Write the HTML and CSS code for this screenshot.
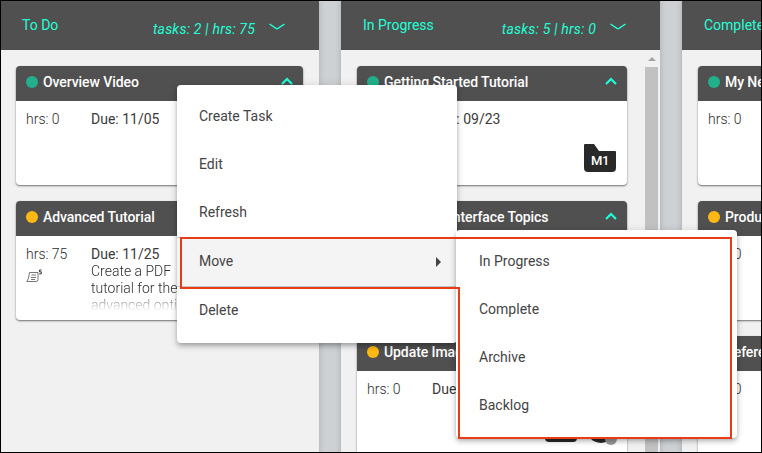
FILE: index.html
```html
<!DOCTYPE html>
<html lang="en">
<head>
<meta charset="utf-8">
<title>Task board</title>
<link rel="stylesheet" href="styles.css">
</head>
<body>
<main class="board">
  <section class="column">
    <header class="column-head">
      <h2>To Do</h2>
      <span class="stats">tasks: 2 | hrs: 75</span>
      <svg class="expand" viewBox="0 0 16 8"><path d="M0.5 1 L7 5.4 Q8 6 9 5.4 L15.5 1"/></svg>
    </header>
    <div class="cards">
      <article class="card">
        <h3><i class="dot green"></i><span>Overview Video</span><svg class="collapse" viewBox="0 0 12 8"><path d="M1 7 6 2 11 7"/></svg></h3>
        <div class="card-body"><div class="hours">hrs: 0</div><div class="due">Due: 11/05</div></div>
      </article>
      <article class="card">
        <h3><i class="dot amber"></i><span>Advanced Tutorial</span></h3>
        <div class="card-body">
          <div class="hours">hrs: 75
            <svg class="note" viewBox="0 0 18 14"><path d="M3.5 3.5H12V10.5Q12 12.5 10 12.5H0.8Q2.6 11 3.5 3.5Z"/><path d="M5.5 6H10M5 8.5H10M5 10.5H9"/><path class="note-mark" d="M15.5 1H13.5V2.8H15.3V4.8H13.2"/></svg>
          </div>
          <div class="due">Due: 11/25<p>Create a PDF<br>tutorial for the<br>advanced options</p></div>
        </div>
      </article>
    </div>
  </section>

  <section class="column">
    <header class="column-head">
      <h2>In Progress</h2>
      <span class="stats">tasks: 5 | hrs: 0</span>
      <svg class="expand" viewBox="0 0 16 8"><path d="M0.5 1 L7 5.4 Q8 6 9 5.4 L15.5 1"/></svg>
    </header>
    <div class="scroller">
      <div class="cards">
        <article class="card">
          <h3><i class="dot green"></i><span>Getting Started Tutorial</span><svg class="collapse" viewBox="0 0 12 8"><path d="M1 7 6 2 11 7"/></svg></h3>
          <div class="card-body"><div class="hours">hrs: 0</div><div class="due">Due: 09/23</div>
            <div class="folder"><svg viewBox="0 0 32 28"><path d="M0 1Q0 0 1 0H10L15 7H31Q32 7 32 8V24Q32 28 28 28H4Q0 28 0 24Z"/></svg><b>M1</b></div>
          </div>
        </article>
        <article class="card">
          <h3><i class="dot green"></i><span>Advanced Interface Topics</span><svg class="collapse" viewBox="0 0 12 8"><path d="M1 7 6 2 11 7"/></svg></h3>
          <div class="card-body"><div class="hours">hrs: 0</div></div>
        </article>
        <article class="card">
          <h3><i class="dot amber"></i><span>Update Images</span></h3>
          <div class="card-body"><div class="hours">hrs: 0</div><div class="due">Due: 10/14</div>
            <div class="badges"><svg viewBox="0 0 72 31"><path d="M0 0H32V24Q32 28 28 28H4Q0 28 0 24Z"/><circle cx="56" cy="14" r="15"/><circle class="status" cx="66" cy="25" r="6"/></svg></div>
          </div>
        </article>
      </div>
      <div class="scrollbar"><i class="up"></i><i class="thumb"></i></div>
    </div>
  </section>

  <section class="column">
    <header class="column-head"><h2>Complete</h2></header>
    <div class="cards">
      <article class="card">
        <h3><i class="dot green"></i><span>My New Project</span></h3>
        <div class="card-body"><div class="hours">hrs: 0</div></div>
      </article>
      <article class="card">
        <h3><i class="dot amber"></i><span>Product Guide</span></h3>
        <div class="card-body"><div class="hours">hrs: 0</div></div>
      </article>
      <article class="card">
        <h3><i class="dot amber"></i><span>Reference</span></h3>
        <div class="card-body"><div class="hours">hrs: 0</div></div>
      </article>
    </div>
  </section>
</main>

<ul class="menu main-menu">
  <li>Create Task</li>
  <li>Edit</li>
  <li>Refresh</li>
  <li class="active">Move<i class="arrow"></i></li>
  <li>Delete</li>
</ul>
<ul class="menu sub-menu">
  <li>In Progress</li>
  <li>Complete</li>
  <li>Archive</li>
  <li>Backlog</li>
</ul>
<svg class="callout" viewBox="0 0 552 202"><path d="M1 1H551V201H279V51H1Z"/></svg>
<div class="frame"></div>
</body>
</html>
```
FILE: styles.css
```css
* { box-sizing: border-box; }
body {
  margin: 0;
  width: 762px;
  height: 453px;
  overflow: hidden;
  position: relative;
  font-family: Roboto, "Liberation Sans", sans-serif;
  font-size: 14px;
  color: #2c2c2c;
}
h2, h3, p, ul { margin: 0; padding: 0; }
svg { display: block; fill: none; }

.board {
  display: grid;
  grid-template-columns: repeat(3, 319px);
  gap: 22px;
  width: 762px;
  height: 453px;
  overflow: hidden;
  background: #cdd1d4;
}
.column {
  background: #f1f1f1;
  min-width: 0;
  box-shadow: 0 0 6px rgba(0, 0, 0, .18);
}
.column-head {
  height: 50px;
  display: flex;
  align-items: center;
  padding: 0 34px 0 22px;
  background: #505050;
  color: #22ffd6;
}
h2 { font-size: 14px; font-weight: 400; line-height: 20px; }
.stats { margin: 8px 14px 0 auto; font-style: italic; line-height: 20px; letter-spacing: .2px; }
.expand { width: 16px; height: 8px; margin-top: 4px; }
.expand path { stroke: #22ffd6; stroke-width: 1.4; }

.cards { padding: 16px; display: flex; flex-direction: column; gap: 16px; flex: 1; min-width: 0; }
.scroller { display: flex; height: 403px; overflow: hidden; }
.card {
  height: 119px;
  flex: none;
  overflow: hidden;
  border-radius: 4px;
  background: #fff;
  box-shadow: 0 1px 2px rgba(0, 0, 0, .55);
}
h3 {
  height: 35px;
  display: flex;
  align-items: center;
  padding: 0 10px;
  background: #505050;
  color: #fff;
  font-size: 14px;
  font-weight: 500;
  line-height: 20px;
  letter-spacing: -.08px;
  white-space: nowrap;
}
h3 span { padding-bottom: 3px; }
.dot { width: 12px; height: 12px; border-radius: 50%; margin: -3px 5px 0 0; flex: none; }
.green { background: #22b08a; }
.amber { background: #fdb813; }
.collapse { width: 12px; height: 8px; margin: -6px 0 0 auto; }
.collapse path { stroke: #1cffdc; stroke-width: 2.2; }
.card-body { position: relative; height: 84px; padding: 10px 10px 9px; display: flex; line-height: 17px; font-weight: 300; }
.hours { width: 65px; flex: none; }
.note { width: 18px; height: 14px; margin-top: 6px; }
.note path { stroke: #666; stroke-width: .9; }
.note .note-mark { stroke: #222; stroke-width: .9; }
.due { white-space: nowrap; font-weight: 400; height: 66px; overflow: hidden; color: #3a3a3a; }
.due p { font-weight: 300; color: #2c2c2c; -webkit-mask-image: linear-gradient(#000 28px, transparent 48px); mask-image: linear-gradient(#000 28px, transparent 48px); }
.folder { position: absolute; right: 11px; bottom: 13px; width: 32px; height: 28px; }
.folder svg { width: 32px; height: 28px; fill: #292929; }
.folder b { position: absolute; left: 0; right: 0; top: 8px; text-align: center; font-size: 13px; font-weight: 500; letter-spacing: -.4px; color: #fff; }
.badges { position: absolute; right: 10px; bottom: 10px; width: 72px; }
.badges svg { fill: #292929; }
.badges .status { fill: #999; }

.scrollbar { width: 17px; padding: 7px 2px 0; display: flex; flex-direction: column; align-items: center; background: #f1f1f1; }
.up { border: 4px solid transparent; border-top: 0; border-bottom-color: #a3a3a3; }
.thumb { width: 13px; flex: 1; margin-top: 6px; background: #c1c1c1; }

.menu {
  position: absolute;
  list-style: none;
  padding: 8px 0;
  background: #fff;
  border-radius: 4px;
  box-shadow: 0 2px 4px -1px rgba(0, 0, 0, .2), 0 4px 5px rgba(0, 0, 0, .14), 0 1px 10px rgba(0, 0, 0, .12);
  color: #444;
}
.menu li { height: 48px; padding: 0 16px 2px 22px; display: flex; align-items: center; justify-content: space-between; }
.menu .active { height: 50px; background: #f4f4f4; border: solid #c4c4c4; border-width: 1px 0; }
.main-menu { left: 177px; top: 85px; width: 280px; }
.sub-menu { left: 456px; top: 230px; width: 281px; }
.sub-menu li { padding-left: 23px; }
.arrow { border: 5px solid transparent; border-left-color: #444; border-right: 0; margin-top: 2px; }

.callout { position: absolute; left: 180px; top: 237px; width: 552px; height: 202px; }
.callout path { stroke: #e73c17; stroke-width: 2; }
.frame { position: absolute; inset: 0; border: 1px solid #000; }
```
